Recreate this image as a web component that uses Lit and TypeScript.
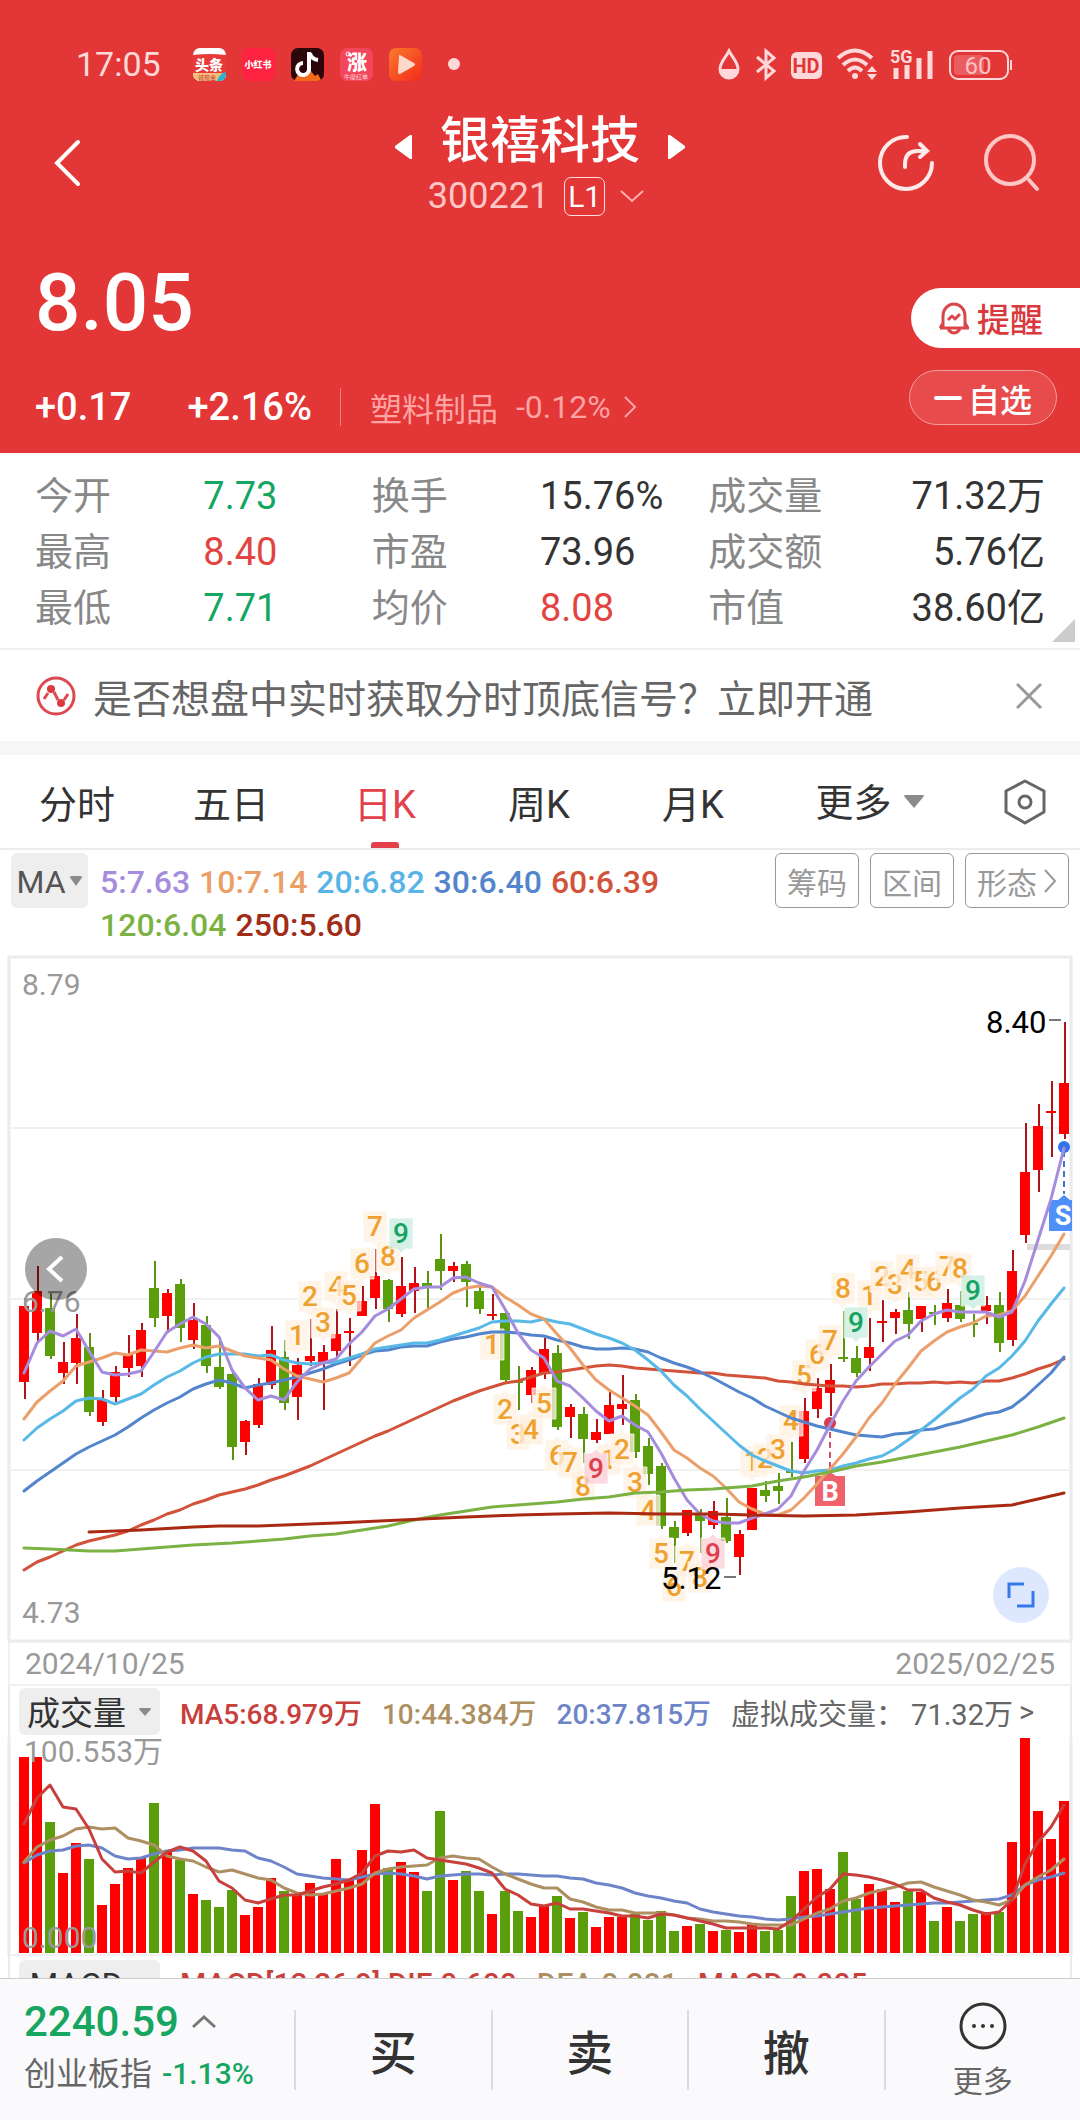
import { LitElement, html, svg, css } from "lit";
import { customElement, property } from "lit/decorators.js";

type Pair = [number, number];

const FIRST = 24;
const STEP = 13;
const at = (i: number) => FIRST + i * STEP;

const COLORS = { r: "#fe0000", g: "#5a9f0b" };
const WICKS = { r: "#b01418", g: "#5a9413" };

// r = closed up, g = closed down; then high, body top, body bottom, low in units from the top of the plot
const CANDLES: ["r" | "g", number, number, number, number][] = [
  ["r", 342, 350, 426, 443], ["r", 310, 335, 377, 385], ["g", 337, 352, 400, 403], ["r", 386, 406, 417, 428],
  ["r", 358, 382, 407, 428], ["g", 377, 391, 456, 460], ["r", 434, 443, 466, 470], ["r", 410, 416, 441, 446],
  ["r", 379, 399, 412, 421], ["r", 367, 374, 410, 421], ["g", 305, 332, 362, 371], ["r", 333, 337, 360, 377],
  ["g", 323, 328, 372, 386], ["r", 347, 364, 384, 393], ["g", 360, 369, 410, 417], ["g", 381, 411, 431, 433],
  ["g", 415, 418, 491, 504], ["r", 464, 465, 486, 499], ["r", 422, 428, 469, 472], ["r", 370, 394, 429, 433],
  ["g", 384, 401, 447, 454], ["r", 402, 409, 441, 464], ["r", 363, 400, 405, 410], ["r", 389, 396, 407, 454],
  ["r", 353, 378, 395, 401], ["r", 362, 375, 375, 410], ["r", 330, 345, 360, 360], ["r", 293, 320, 342, 353],
  ["g", 323, 324, 353, 366], ["r", 301, 330, 358, 361], ["r", 311, 327, 335, 357], ["g", 315, 327, 332, 352],
  ["g", 278, 303, 315, 334], ["r", 306, 310, 315, 326], ["g", 305, 308, 326, 351], ["g", 331, 335, 353, 358],
  ["r", 338, 358, 358, 364], ["g", 356, 357, 424, 426], ["g", 410, 425, 425, 454], ["r", 411, 414, 439, 447],
  ["r", 382, 393, 418, 423], ["g", 389, 397, 471, 474], ["r", 448, 451, 461, 482], ["g", 451, 458, 483, 507],
  ["r", 463, 476, 484, 487], ["r", 436, 449, 478, 478], ["r", 419, 448, 453, 469], ["g", 438, 444, 496, 502],
  ["g", 482, 490, 518, 529], ["g", 507, 510, 570, 573], ["g", 565, 571, 582, 607], ["r", 554, 554, 577, 580],
  ["g", 553, 559, 565, 597], ["r", 545, 555, 569, 573], ["g", 542, 561, 585, 587], ["r", 574, 578, 601, 619],
  ["r", 532, 532, 574, 574], ["g", 525, 534, 540, 546], ["g", 517, 530, 535, 548], ["g", 486, 515, 515, 521],
  ["r", 442, 455, 503, 507], ["r", 422, 432, 453, 462], ["r", 408, 424, 437, 460], ["g", 355, 401, 401, 406],
  ["g", 390, 402, 417, 421], ["r", 362, 391, 402, 415], ["r", 344, 365, 365, 386], ["r", 353, 356, 362, 378],
  ["g", 336, 354, 368, 383], ["r", 350, 350, 363, 376], ["g", 349, 356, 356, 369], ["r", 333, 347, 362, 366],
  ["g", 335, 349, 363, 366], ["g", 358, 367, 367, 381], ["r", 340, 349, 355, 368], ["g", 336, 349, 387, 396],
  ["r", 294, 315, 384, 390], ["r", 167, 216, 279, 287], ["r", 148, 170, 214, 236], ["r", 125, 155, 155, 201],
  ["r", 66, 127, 178, 183],
];

const MA5 = [417, 387, 375, 380, 373, 395, 416, 419, 418, 415, 396, 376, 368, 361, 368, 381, 414, 432, 444, 440, 444, 426, 413, 407, 403, 388, 376, 360, 353, 343, 333, 331, 331, 322, 321, 327, 331, 353, 377, 394, 402, 425, 430, 442, 455, 465, 460, 469, 476, 497, 522, 544, 558, 565, 567, 567, 562, 558, 553, 540, 515, 494, 469, 445, 425, 411, 398, 385, 379, 365, 358, 354, 356, 356, 356, 361, 356, 325, 284, 243, 192];
const MA10 = [463, 446, 435, 425, 410, 406, 402, 397, 399, 394, 395, 396, 392, 389, 392, 390, 395, 400, 402, 404, 413, 420, 423, 426, 422, 417, 402, 387, 380, 374, 362, 354, 346, 337, 332, 330, 331, 341, 349, 358, 363, 378, 392, 409, 424, 434, 442, 450, 459, 476, 494, 502, 512, 520, 532, 546, 553, 558, 559, 554, 542, 528, 513, 498, 481, 462, 447, 428, 412, 395, 385, 376, 371, 367, 360, 359, 355, 340, 320, 300, 278];
const MA20 = [484, 472, 463, 455, 445, 442, 443, 448, 443, 438, 429, 421, 415, 407, 401, 398, 398, 398, 400, 399, 404, 407, 408, 407, 406, 402, 398, 393, 391, 389, 387, 387, 384, 380, 376, 372, 366, 365, 365, 366, 363, 366, 368, 373, 378, 382, 387, 394, 404, 415, 429, 440, 453, 465, 477, 489, 499, 505, 510, 515, 517, 515, 514, 510, 507, 503, 500, 493, 484, 474, 464, 453, 442, 433, 420, 412, 400, 385, 365, 348, 332];
const MA30 = [535, 525, 516, 507, 498, 491, 485, 479, 471, 462, 454, 447, 441, 433, 428, 424, 427, 432, 429, 427, 424, 421, 417, 413, 408, 404, 399, 395, 394, 391, 390, 390, 386, 383, 381, 378, 376, 376, 377, 379, 380, 384, 387, 391, 393, 393, 392, 393, 396, 402, 407, 411, 416, 422, 429, 436, 442, 450, 456, 462, 466, 470, 473, 476, 479, 480, 481, 478, 477, 474, 473, 469, 466, 462, 458, 456, 451, 441, 429, 417, 401];
const MA60 = [614, 606, 601, 595, 589, 585, 582, 579, 575, 569, 564, 558, 554, 548, 544, 539, 536, 533, 529, 524, 520, 515, 510, 504, 498, 492, 486, 480, 475, 469, 463, 457, 451, 445, 440, 435, 431, 427, 425, 421, 417, 416, 414, 412, 410, 409, 410, 412, 413, 414, 415, 416, 417, 417, 419, 420, 421, 422, 425, 426, 428, 429, 430, 430, 431, 430, 428, 428, 427, 427, 426, 427, 426, 427, 425, 425, 422, 418, 413, 409, 403];
const MA120: Pair[] = [[0, 592], [2, 593], [5, 595], [7, 595], [10, 592], [13, 589], [16, 587], [18, 585], [20, 583], [22, 580], [24, 578], [26, 574], [28, 570], [30, 564], [32, 559], [34, 555], [36, 551], [38, 549], [41, 546], [43, 543], [45, 541], [47, 537], [49, 536], [51, 534], [53, 533], [54, 532], [56, 530], [58, 525], [60, 521], [62, 516], [64, 510], [66, 506], [68, 501], [70, 496], [72, 491], [74, 485], [76, 479], [78, 471], [80, 462]];
const MA250: Pair[] = [[5, 576], [9, 574], [13, 571], [15, 570], [18, 570], [20, 569], [24, 567], [29, 564], [34, 561], [38, 559], [41, 558], [45, 557], [49, 558], [53, 558], [56, 559], [60, 560], [64, 559], [68, 556], [72, 552], [76, 549], [78, 543], [80, 537]];

// day index, digit, centre height, side the pointer is on
const MARKS: [number, number, number, "u" | "d"][] = [
  [21, 1, 379, "d"], [22, 2, 340, "d"], [23, 3, 366, "d"], [24, 4, 330, "d"], [25, 5, 339, "d"], [26, 6, 307, "d"],
  [27, 7, 270, "d"], [28, 8, 300, "d"], [29, 9, 277, "d"],
  [36, 1, 388, "u"], [37, 2, 453, "u"], [38, 3, 478, "u"], [39, 4, 473, "u"], [40, 5, 447, "u"], [41, 6, 499, "u"],
  [42, 7, 506, "u"], [43, 8, 530, "u"], [45, 1, 503, "u"], [44, 9, 512, "u"], [46, 2, 493, "u"], [47, 3, 526, "u"],
  [48, 4, 554, "u"], [49, 5, 597, "u"], [50, 6, 630, "u"], [51, 7, 605, "u"], [52, 8, 621, "u"], [53, 9, 597, "u"],
  [56, 1, 505, "d"], [57, 2, 502, "d"], [58, 3, 493, "d"], [59, 4, 464, "d"], [60, 5, 419, "d"], [61, 6, 398, "d"],
  [62, 7, 384, "d"], [63, 8, 332, "d"], [65, 1, 339, "d"], [64, 9, 366, "d"], [66, 2, 320, "d"], [67, 3, 328, "d"],
  [68, 4, 313, "d"], [69, 5, 325, "d"], [70, 6, 325, "d"], [71, 7, 310, "d"], [72, 8, 312, "d"], [73, 9, 334, "d"],
];

const VOLUME_TOPS = [20, 20, 85, 136, 106, 122, 168, 147, 131, 121, 66, 115, 123, 157, 163, 170, 153, 178, 170, 141, 154, 158, 146, 156, 122, 143, 113, 67, 131, 125, 135, 154, 74, 143, 134, 154, 177, 154, 174, 180, 168, 159, 181, 175, 190, 180, 180, 177, 183, 174, 194, 189, 187, 194, 193, 195, 186, 194, 193, 159, 134, 132, 152, 115, 162, 147, 152, 165, 154, 155, 184, 170, 184, 177, 175, 175, 105, 1, 74, 102, 64];
const VOL5 = [87, 61, 48, 70, 72, 92, 122, 135, 134, 136, 125, 115, 110, 114, 124, 144, 151, 163, 166, 162, 158, 158, 154, 150, 147, 143, 136, 119, 114, 115, 113, 121, 123, 125, 127, 131, 136, 152, 158, 167, 169, 166, 172, 172, 174, 176, 179, 179, 181, 177, 178, 181, 184, 187, 191, 191, 191, 191, 192, 184, 172, 160, 152, 137, 138, 140, 143, 147, 153, 153, 161, 165, 168, 173, 177, 175, 163, 127, 105, 90, 68];
const VOL10 = [125, 110, 103, 99, 92, 90, 92, 91, 101, 104, 108, 119, 122, 124, 130, 135, 133, 137, 141, 143, 151, 156, 158, 157, 154, 151, 147, 136, 132, 130, 129, 128, 121, 119, 121, 122, 130, 137, 142, 147, 151, 151, 162, 165, 170, 173, 173, 176, 176, 176, 178, 181, 182, 184, 184, 185, 187, 188, 188, 188, 182, 176, 172, 164, 161, 156, 153, 150, 146, 145, 150, 154, 158, 163, 165, 168, 163, 148, 140, 133, 122];
const VOL20 = [126, 118, 114, 113, 109, 108, 111, 119, 122, 121, 117, 114, 113, 111, 111, 111, 113, 114, 121, 124, 130, 137, 139, 141, 142, 143, 140, 137, 136, 137, 139, 142, 139, 138, 137, 137, 138, 137, 137, 138, 139, 139, 141, 142, 146, 148, 151, 156, 159, 161, 164, 166, 172, 175, 177, 179, 180, 182, 183, 182, 180, 179, 177, 175, 173, 171, 170, 169, 168, 167, 166, 166, 165, 164, 163, 162, 158, 148, 143, 140, 136];

const daily = (ys: number[]) => ys.map((y, i) => `${at(i)},${y}`).join(" ");
const sparse = (ps: Pair[]) => ps.map(([i, y]) => `${at(i)},${y}`).join(" ");

const chartText = css`
  text {
    font-family: Roboto, "Noto Sans CJK SC", sans-serif;
  }
  svg {
    display: block;
    width: 100%;
    height: auto;
    overflow: visible;
  }
  .line {
    fill: none;
    stroke-width: 3;
    stroke-linejoin: round;
    stroke-linecap: round;
  }
  .scale {
    font-size: 30px;
    fill: #999;
  }
`;

@customElement("price-chart")
export class PriceChart extends LitElement {
  static styles = [
    chartText,
    css`
      :host {
        display: block;
        position: relative;
      }
      .extreme {
        font-size: 31px;
        fill: #000;
      }
      .digit {
        font-size: 28px;
        font-weight: 500;
        text-anchor: middle;
      }
      .trade {
        font-size: 27px;
        font-weight: 700;
        fill: #fff;
        text-anchor: middle;
      }
      button {
        position: absolute;
        border: 0;
        padding: 0;
        border-radius: 50%;
      }
      .older {
        left: 25px;
        top: 282px;
        width: 62px;
        height: 62px;
        background: rgba(0, 0, 0, 0.35);
      }
      .expand {
        right: 31px;
        bottom: 19px;
        width: 56px;
        height: 56px;
        background: #dde8fe;
      }
    `,
  ];

  private mark([i, n, y, side]: (typeof MARKS)[number]) {
    const x = at(i);
    const nine = n === 9;
    const box = nine ? (side === "d" ? "#c8ecdc" : "#fccdd6") : "#fff0e0";
    const ink = nine ? (side === "d" ? "#17a363" : "#dc3f4e") : "#eea12f";
    const head = side === "u" ? "h8 l4 -4 l4 4 h8" : "h24";
    const foot = side === "d" ? "h-8 l-4 4 l-4 -4 h-8" : "h-24";
    return svg`
      <path d=${`M${x - 12} ${y - 15} ${head} v31 ${foot} z`} fill=${box} fill-opacity=".75" stroke="#fff" stroke-opacity=".7"></path>
      <text class="digit" x=${x} y=${y + 10} fill=${ink}>${n}</text>`;
  }

  private candle([dir, high, top, bottom, low]: (typeof CANDLES)[number], i: number) {
    const x = at(i);
    return svg`
      <rect x=${x} y=${high} width="2" height=${low - high} fill=${WICKS[dir]}></rect>
      <rect x=${x - 5} y=${top} width="10" height=${Math.max(bottom - top, 2)} fill=${COLORS[dir]}></rect>`;
  }

  render() {
    return html`
      <svg viewBox="0 0 1080 686" role="img" aria-label="日K">
        <path d="M9 172H1071M9 343H1071M9 514H1071" stroke="#f1f1f1" stroke-width="2"></path>
        <path d="M9 686V1H1071V686M9 685H1071" fill="none" stroke="#ebebeb" stroke-width="3"></path>
        <rect x="1027" y="288" width="43" height="6" fill="#dcdcdc"></rect>
        <text class="scale" x="22" y="39">8.79</text>
        <text class="scale" x="22" y="667">4.73</text>
        ${CANDLES.map((c, i) => this.candle(c, i))}
        ${MARKS.map((m) => this.mark(m))}
        <text class="scale" x="22" y="356">6.76</text>
        <path d="M1064 195V238" stroke="#3c78c8" stroke-width="2" stroke-dasharray="6 4"></path>
        <circle cx="1064" cy="191" r="6" fill="#2f74ea"></circle>
        <path d="M1049 244H1058L1064 239L1070 244H1072V275H1049z" fill="#4f90f8"></path>
        <text class="trade" x="1063" y="269">S</text>
        <circle cx="830" cy="467" r="6" fill="#d83a50"></circle>
        <path d="M830 476V514" stroke="#d0506a" stroke-width="2" stroke-dasharray="6 4"></path>
        <path d="M815 520H824L830 516L836 520H845V550H815z" fill="#f0626b"></path>
        <text class="trade" x="830" y="545">B</text>
        <polyline class="line" stroke="#d2533a" points=${daily(MA60)}></polyline>
        <polyline class="line" stroke="#5385cc" points=${daily(MA30)}></polyline>
        <polyline class="line" stroke="#58b8e6" points=${daily(MA20)}></polyline>
        <polyline class="line" stroke="#eb9f6b" points=${daily(MA10)}></polyline>
        <polyline class="line" stroke="#a68cdc" points=${daily(MA5)}></polyline>
        <polyline class="line" stroke="#7bb243" points=${sparse(MA120)}></polyline>
        <polyline class="line" stroke="#a92912" points=${sparse(MA250)}></polyline>
        <text class="extreme" x="986" y="77">8.40</text>
        <path d="M1049 64H1061M724 621H736" stroke="#777" stroke-width="2"></path>
        <text class="extreme" x="661" y="633">5.12</text>
      </svg>
      <button class="older" aria-label="更早">
        <svg viewBox="0 0 62 62">
          <path d="M37 19L24 31L37 43" fill="none" stroke="#fff" stroke-width="4"></path>
        </svg>
      </button>
      <button class="expand" aria-label="全屏">
        <svg viewBox="0 0 56 56">
          <path d="M31 17H16V31M40 24V39H24" fill="none" stroke="#3478ea" stroke-width="3"></path>
        </svg>
      </button>
    `;
  }
}

@customElement("volume-chart")
export class VolumeChart extends LitElement {
  static styles = [
    chartText,
    css`
      :host {
        display: block;
      }
    `,
  ];

  render() {
    return html`
      <svg viewBox="0 0 1080 220" role="img" aria-label="成交量">
        <path d="M9 0V220M1071 0V220" stroke="#ebebeb" stroke-width="3"></path>
        <path d="M10 218H1071" stroke="#f1f1f1" stroke-width="2"></path>
        ${VOLUME_TOPS.map(
          (top, i) => svg`<rect x=${at(i) - 5} y=${top} width="10" height=${216 - top} fill=${COLORS[CANDLES[i][0]]}></rect>`
        )}
        <polyline class="line" stroke="#6d84c9" points=${daily(VOL20)}></polyline>
        <polyline class="line" stroke="#ad8f62" points=${daily(VOL10)}></polyline>
        <polyline class="line" stroke="#c7403c" points=${daily(VOL5)}></polyline>
        <text class="scale" x="24" y="25">100.553万</text>
        <text class="scale" x="22" y="211">0.000</text>
      </svg>
    `;
  }
}

@customElement("status-bar")
export class StatusBar extends LitElement {
  static styles = css`
    :host {
      display: flex;
      align-items: center;
      height: 96px;
      padding: 32px 67px 0 76px;
      color: #ffd9d9;
      font-size: 34px;
    }
    .apps,
    .system {
      display: flex;
      align-items: center;
      gap: 16px;
    }
    .system {
      gap: 14px;
    }
    .apps {
      flex: 1;
      padding-left: 32px;
    }
    svg {
      display: block;
      overflow: visible;
      font-family: Roboto, "Noto Sans CJK SC", sans-serif;
    }
    .dot {
      width: 12px;
      height: 12px;
      margin-left: 10px;
      border-radius: 50%;
      background: #ffd9d9;
    }
  `;

  render() {
    return html`
      <span>17:05</span>
      <div class="apps">
        <svg width="33" height="33" viewBox="0 0 33 33">
          <rect width="33" height="33" rx="7" fill="#fff"></rect>
          <path d="M0 7Q16 5 33 7V26H0z" fill="#e93a3b"></path>
          <path d="M0 25H33V27Q32 33 26 33H7Q1 33 0 26z" fill="#f3bd7c"></path>
          <path d="M33 24V27Q32 33 26 33H24Q26 26 33 24z" fill="#26b5cf"></path>
          <text x="16" y="22" font-size="14" font-weight="900" fill="#fff" text-anchor="middle">头条</text>
          <text x="14" y="32" font-size="6" fill="#c4362c" text-anchor="middle">领现金</text>
        </svg>
        <svg width="33" height="33" viewBox="0 0 33 33">
          <rect width="33" height="33" rx="7" fill="#fe2341"></rect>
          <text x="16" y="20" font-size="9" font-weight="900" fill="#fff" text-anchor="middle">小红书</text>
        </svg>
        <svg width="33" height="33" viewBox="0 0 33 33">
          <rect width="33" height="33" rx="7" fill="#2c0608"></rect>
          <path d="M3 33L8 25L13 28L19 22L24 28L27 26L30 32Q28 33 26 33z" fill="#f26b1d"></path>
          <path d="M18 4V20A6 6 0 1 1 12 15" fill="none" stroke="#fff" stroke-width="4"></path>
          <path d="M19 5Q20 11 27 12" fill="none" stroke="#fff" stroke-width="4"></path>
        </svg>
        <svg width="33" height="33" viewBox="0 0 33 33">
          <rect width="33" height="33" rx="7" fill="#f3465c"></rect>
          <text x="17" y="22" font-size="20" font-weight="900" fill="#fff" text-anchor="middle">涨</text>
          <circle cx="8" cy="6" r="2" fill="none" stroke="#fff"></circle>
          <text x="16" y="31" font-size="6" fill="#ffd9d9" text-anchor="middle">牛摩红单</text>
        </svg>
        <svg width="33" height="33" viewBox="0 0 33 33">
          <defs>
            <linearGradient id="orange" x1="0" y1="0" x2="1" y2="1">
              <stop offset="0" stop-color="#fb7a2c"></stop>
              <stop offset="1" stop-color="#f22a1c"></stop>
            </linearGradient>
          </defs>
          <rect width="33" height="33" rx="7" fill="url(#orange)"></rect>
          <path d="M10 8Q9 7 11 7L25 15Q27 16 25 18L11 26Q9 26 9 25z" fill="#ffd8cc"></path>
        </svg>
        <span class="dot"></span>
      </div>
      <div class="system">
        <svg width="26" height="33" viewBox="0 0 26 33">
          <path d="M14 3C17 9 23 14 23 21A9 9 0 0 1 5 21C5 14 11 9 14 3z" fill="none" stroke="#ffd9d9" stroke-width="3"></path>
          <path d="M4 21H24A10 10 0 0 1 4 21z" fill="#ffd9d9"></path>
        </svg>
        <svg width="22" height="33" viewBox="0 0 22 33">
          <path d="M2 9L19 23L11 30V3L19 10L2 24" fill="none" stroke="#ffd9d9" stroke-width="3"></path>
        </svg>
        <svg width="31" height="33" viewBox="0 0 31 33">
          <rect y="4" width="31" height="27" rx="6" fill="#ffd9d9"></rect>
          <text x="15" y="25" font-size="20" font-weight="700" fill="#e23637" text-anchor="middle">HD</text>
        </svg>
        <svg width="40" height="33" viewBox="0 0 40 33">
          <g fill="none" stroke="#ffd9d9" stroke-width="4">
            <path d="M2 10Q19 -5 36 10"></path>
            <path d="M7 17Q19 6 31 17"></path>
            <path d="M12 23Q19 16 26 23"></path>
          </g>
          <circle cx="19" cy="28" r="3" fill="#ffd9d9"></circle>
          <path d="M31 24L36 18L41 24zM31 26L36 32L41 26z" fill="#ffd9d9"></path>
        </svg>
        <svg width="45" height="33" viewBox="0 0 45 33">
          <text x="0" y="15" font-size="18" font-weight="700" fill="#ffd9d9">5G</text>
          <path d="M6 20V31M17 17V31M29 10V31M40 3V31" stroke="#ffd9d9" stroke-width="5"></path>
        </svg>
        <svg width="64" height="33" viewBox="0 0 64 33">
          <rect x="1" y="3" width="58" height="28" rx="8" fill="none" stroke="#ffd9d9" stroke-width="2"></rect>
          <rect x="5" y="7" width="30" height="20" rx="4" fill="#ea5c5e"></rect>
          <path d="M62 12V22" stroke="#ffd9d9" stroke-width="2"></path>
          <text x="29" y="26" font-size="24" fill="#ffc2c2" text-anchor="middle">60</text>
        </svg>
      </div>
    `;
  }
}

@customElement("pick-list")
export class PickList extends LitElement {
  @property() label = "";
  @property() value = "";

  static styles = css`
    :host {
      display: flex;
      align-items: center;
      gap: var(--pick-gap, 2px);
      color: inherit;
    }
    select {
      appearance: none;
      border: 0;
      padding: 3px 0 0;
      margin: 0;
      background: none;
      color: inherit;
      font: inherit;
    }
    i {
      border: solid transparent;
      border-width: var(--arrow, 10px) var(--arrow-half, 7px) 0;
      border-top-color: #8b8b8b;
      border-radius: 3px;
    }
  `;

  render() {
    return html`<select aria-label=${this.label}><option>${this.value}</option></select><i></i>`;
  }
}

const QUOTES: [string, string, string][] = [
  ["今开", "7.73", "down"], ["换手", "15.76%", ""], ["成交量", "71.32万", ""],
  ["最高", "8.40", "up"], ["市盈", "73.96", ""], ["成交额", "5.76亿", ""],
  ["最低", "7.71", "down"], ["均价", "8.08", "up"], ["市值", "38.60亿", ""],
];

const AVERAGES: [string, string][] = [
  ["5:7.63", "ma5"], ["10:7.14", "ma10"], ["20:6.82", "ma20"], ["30:6.40", "ma30"],
  ["60:6.39", "ma60"], ["120:6.04", "ma120"], ["250:5.60", "ma250"],
];

@customElement("app-root")
export class AppRoot extends LitElement {
  static styles = css`
    :host {
      display: flex;
      flex-direction: column;
      height: 100vh;
      background: #fff;
      color: #333;
      font-family: Roboto, "Noto Sans CJK SC", sans-serif;
      font-size: 38px;
    }
    * {
      box-sizing: border-box;
    }
    button {
      border: 0;
      padding: 0;
      background: none;
      color: inherit;
      font: inherit;
      white-space: nowrap;
    }
    a {
      color: inherit;
      text-decoration: none;
    }
    svg {
      display: block;
      flex: none;
    }
    button,
    a {
      display: flex;
      align-items: center;
      justify-content: center;
    }
    .scroll {
      flex: 1;
      min-height: 0;
      overflow: hidden auto;
      scrollbar-width: none;
    }

    .head {
      background: #e23637;
      color: #fff;
    }
    .nav {
      display: grid;
      grid-template-columns: 1fr auto 1fr;
      height: 126px;
      padding: 0 40px;
    }
    .tools {
      display: flex;
      justify-content: flex-end;
      align-items: center;
      gap: 44px;
      padding-top: 8px;
    }
    .back {
      justify-self: start;
      padding: 8px 0 0 8px;
    }
    .name {
      display: flex;
      align-items: center;
      justify-content: center;
      gap: 28px;
      height: 58px;
      margin-top: 16px;
    }
    h1 {
      margin: 0;
      font-size: 50px;
      line-height: 58px;
      font-weight: 500;
    }
    .name button {
      padding-top: 12px;
    }
    .code {
      display: flex;
      align-items: center;
      justify-content: center;
      gap: 15px;
      height: 40px;
      margin-top: 6px;
      padding-right: 8px;
      font-size: 36px;
      color: #ffc6c6;
    }
    .level {
      width: 41px;
      height: 39px;
      border: 1px solid #ffdede;
      border-radius: 7px;
      color: #fff;
      font-size: 30px;
      line-height: 37px;
      text-align: center;
    }
    .quote {
      display: flex;
      justify-content: space-between;
      padding: 41px 0 21px 35px;
    }
    .price {
      height: 80px;
      font-size: 80px;
      line-height: 80px;
      font-weight: 500;
    }
    .change {
      display: flex;
      align-items: center;
      height: 50px;
      margin-top: 39px;
      font-size: 38px;
      font-weight: 500;
    }
    .change b {
      font-weight: inherit;
      margin-right: 56px;
    }
    .change b + b {
      margin-right: 28px;
    }
    .sector {
      gap: 18px;
      padding-left: 29px;
      border-left: 1px solid #f08080;
      color: #ffa3a3;
      height: 38px;
      font-size: 32px;
      font-weight: 400;
    }
    .sector svg {
      margin-left: -6px;
    }
    .side {
      display: flex;
      flex-direction: column;
      align-items: flex-end;
      gap: 22px;
      padding-top: 25px;
    }
    .remind {
      gap: 8px;
      height: 60px;
      padding: 0 37px 0 28px;
      border-radius: 30px 0 0 30px;
      background: #fff;
      color: #d9393c;
      font-size: 33px;
      font-weight: 500;
    }
    .watch {
      gap: 6px;
      height: 55px;
      padding: 0 24px;
      margin-right: 23px;
      border: 1px solid #f3a0a0;
      border-radius: 28px;
      background: #e74b4c;
      font-size: 32px;
      font-weight: 500;
    }

    .stats {
      position: relative;
      display: grid;
      grid-template-columns: repeat(3, 1fr);
      margin: 0;
      padding: 15px 35px 12px;
      border-bottom: 2px solid #efefef;
      line-height: 56px;
    }
    .stats div {
      display: grid;
      grid-template-columns: 1fr 1fr;
    }
    .stats div:nth-child(3n) {
      grid-template-columns: auto 1fr;
      text-align: right;
    }
    dt {
      color: #888;
    }
    dd {
      margin: 0;
    }
    .up {
      color: #e24441;
    }
    .down {
      color: #17a562;
    }
    .corner {
      position: absolute;
      right: 5px;
      bottom: 6px;
    }

    .notice {
      display: flex;
      align-items: center;
      height: 91px;
      padding: 0 38px 0 36px;
      color: #666;
      font-size: 39px;
    }
    .notice a {
      flex: 1;
      justify-content: flex-start;
      margin-left: 17px;
    }
    .tabs {
      display: grid;
      grid-template-columns: repeat(5, 1fr) 200px 110px;
      height: 109px;
      border-top: 14px solid #f7f7f7;
      border-bottom: 2px solid #ececec;
    }
    .tabs > * {
      position: relative;
      justify-content: center;
    }
    .tabs .on {
      color: #e2404a;
    }
    .tabs .on::after {
      content: "";
      position: absolute;
      left: 50%;
      bottom: 0;
      width: 28px;
      height: 6px;
      margin-left: -14px;
      border-radius: 3px 3px 0 0;
      background: #e2404a;
    }
    .tabs pick-list {
      --pick-gap: 10px;
      --arrow: 13px;
      --arrow-half: 11px;
    }

    .averages {
      display: flex;
      align-items: flex-start;
      min-height: 106px;
      padding: 3px 11px 0;
    }
    .chip {
      flex: none;
      justify-content: center;
      border-radius: 6px;
      background: #eeeeee;
    }
    .ma {
      height: 55px;
      width: 77px;
      color: #555;
      font-size: 32px;
    }
    .values {
      flex: 1;
      display: flex;
      flex-wrap: wrap;
      column-gap: 9px;
      margin: 8px 60px 0 12px;
      font-size: 32px;
      line-height: 43px;
      font-weight: 500;
    }
    .ma5 { color: #a68cdc; }
    .ma10 { color: #eb9f66; }
    .ma20 { color: #58b4e6; }
    .ma30 { color: #5385cc; }
    .ma60 { color: #d2533a; }
    .ma120 { color: #7bb243; }
    .ma250 { color: #a02c17; }
    .views {
      display: flex;
      gap: 11px;
    }
    .views button {
      height: 55px;
      padding: 0 11px;
      border: 1px solid #999;
      border-radius: 6px;
      color: #999;
      font-size: 30px;
      gap: 6px;
    }

    .dates {
      display: flex;
      justify-content: space-between;
      height: 44px;
      margin: 0 8px;
      padding: 0 15px;
      border: solid #f1f1f1;
      border-width: 0 2px 2px;
      color: #999;
      font-size: 30px;
      line-height: 44px;
    }
    .indicator {
      display: flex;
      align-items: center;
      gap: 20px;
      height: 51px;
      margin: 0 8px;
      padding: 0 9px;
      border: solid #ebebeb;
      border-width: 0 2px;
      font-size: 28px;
      white-space: nowrap;
    }
    .indicator .chip {
      width: 141px;
      height: 47px;
      font-size: 33px;
      --pick-gap: 12px;
      --arrow: 8px;
      --arrow-half: 7px;
    }
    .macd {
      padding-top: 2px;
      font-size: 30px;
    }
    .c1 { color: #c7403c; font-weight: 500; }
    .c2 { color: #ad8f62; font-weight: 500; }
    .c3 { color: #6d84c9; font-weight: 500; }
    .indicator a {
      gap: 6px;
      color: #666;
      font-size: 29px;
    }

    .foot {
      display: grid;
      grid-template-columns: 294px repeat(4, 1fr);
      align-items: center;
      height: 142px;
      border-top: 1px solid #ccc;
      background: #fafafc;
    }
    .foot > * {
      height: 80px;
    }
    .index {
      flex-direction: column;
      align-items: flex-start;
      justify-content: center;
      gap: 3px;
      padding: 0 0 8px 24px;
    }
    .index span {
      display: flex;
      align-items: center;
      white-space: nowrap;
    }
    .index .points {
      gap: 13px;
      font-size: 42px;
      line-height: 54px;
      font-weight: 500;
      color: #17a562;
    }
    .index .move {
      gap: 10px;
      font-size: 32px;
      line-height: 44px;
      color: #666;
    }
    .move b {
      color: #17a562;
      font-size: 30px;
      font-weight: 500;
    }
    .deal {
      border-left: 2px solid #dcdcdf;
      font-size: 47px;
      font-weight: 500;
    }
    .more {
      flex-direction: column;
      gap: 10px;
      padding-top: 6px;
      border-left: 2px solid #dcdcdf;
      color: #666;
      font-size: 30px;
      line-height: 44px;
    }
  `;

  render() {
    return html`
      <div class="scroll">
        <header class="head">
          <status-bar></status-bar>
          <div class="nav">
            <button class="back" aria-label="返回">
              <svg width="40" height="48" viewBox="0 0 40 48">
                <path d="M30 3L9 24L30 45" fill="none" stroke="#fff" stroke-width="4" stroke-linecap="round"></path>
              </svg>
            </button>
            <div>
              <div class="name">
                <button aria-label="上一只">
                  <svg width="17" height="24" viewBox="0 0 17 24"><path d="M17 0V24L15 24L0 13V11L15 0z" fill="#fff"></path></svg>
                </button>
                <h1>银禧科技</h1>
                <button aria-label="下一只">
                  <svg width="17" height="24" viewBox="0 0 17 24"><path d="M0 0V24L2 24L17 13V11L2 0z" fill="#fff"></path></svg>
                </button>
              </div>
              <div class="code">
                <span>300221</span><span class="level">L1</span>
                <svg width="24" height="14" viewBox="0 0 24 14"><path d="M1 2L12 12L23 2" fill="none" stroke="#ffb0b0" stroke-width="2"></path></svg>
              </div>
            </div>
            <div class="tools">
              <button aria-label="分享">
                <svg width="60" height="60" viewBox="0 0 60 60" fill="none" stroke="#ffeaea" stroke-width="4" stroke-linecap="round">
                  <path d="M31 4A26 26 0 1 0 56 30"></path>
                  <path d="M29 34V31Q29 18 42 18H50M44 11L51 18L44 24"></path>
                </svg>
              </button>
              <button aria-label="搜索">
                <svg width="60" height="60" viewBox="0 0 60 60" fill="none" stroke="#ffc6c6" stroke-width="4" stroke-linecap="round">
                  <circle cx="30" cy="27" r="24"></circle>
                  <path d="M49 47L57 56"></path>
                </svg>
              </button>
            </div>
          </div>
          <div class="quote">
            <div>
              <div class="price">8.05</div>
              <div class="change">
                <b>+0.17</b><b>+2.16%</b>
                <a class="sector" href="#sector">
                  <span>塑料制品</span><span>-0.12%</span>
                  <svg width="14" height="22" viewBox="0 0 14 22"><path d="M2 1L12 11L2 21" fill="none" stroke="#ffa3a3" stroke-width="2"></path></svg>
                </a>
              </div>
            </div>
            <div class="side">
              <button class="remind">
                <svg width="30" height="34" viewBox="0 0 30 34" fill="none" stroke="#d9474b" stroke-width="3" stroke-linejoin="round">
                  <path d="M4 27V15A11 12 0 0 1 26 15V27M1 27H29L26 22M4 22L1 27"></path>
                  <path d="M9 28Q15 36 21 28"></path>
                  <path d="M9 19L13 15L16 18L21 13"></path>
                </svg>
                提醒
              </button>
              <button class="watch">
                <svg width="28" height="6" viewBox="0 0 28 6"><path d="M2 3H26" stroke="#fff" stroke-width="4" stroke-linecap="round"></path></svg>
                自选
              </button>
            </div>
          </div>
        </header>

        <dl class="stats">
          ${QUOTES.map(([k, v, tone]) => html`<div><dt>${k}</dt><dd class=${tone}>${v}</dd></div>`)}
          <svg class="corner" width="23" height="23" viewBox="0 0 23 23"><path d="M23 0V23H0z" fill="#ccc"></path></svg>
        </dl>

        <div class="notice">
          <svg width="40" height="40" viewBox="0 0 40 40" fill="none" stroke="#dc4a50" stroke-width="3">
            <circle cx="20" cy="20" r="18"></circle>
            <path d="M8 23L12 17M18 16L22 24M28 24L32 18"></path>
            <g fill="#dc3a40" stroke="none"><circle cx="15" cy="13" r="4"></circle><circle cx="25" cy="27" r="4"></circle></g>
          </svg>
          <a href="#open">是否想盘中实时获取分时顶底信号？立即开通</a>
          <button aria-label="关闭">
            <svg width="26" height="26" viewBox="0 0 26 26"><path d="M1 1L25 25M25 1L1 25" stroke="#999" stroke-width="3"></path></svg>
          </button>
        </div>

        <nav class="tabs">
          <button>分时</button><button>五日</button><button class="on">日K</button><button>周K</button><button>月K</button>
          <pick-list label="周期" value="更多"></pick-list>
          <button aria-label="设置">
            <svg width="44" height="46" viewBox="0 0 44 46" fill="none" stroke="#666" stroke-width="3" stroke-linejoin="round">
              <path d="M22 2L41 12V33L22 44L3 33V12z"></path>
              <circle cx="22" cy="23" r="6"></circle>
            </svg>
          </button>
        </nav>

        <section>
          <div class="averages">
            <pick-list class="chip ma" label="指标" value="MA"></pick-list>
            <div class="values">${AVERAGES.map(([t, c]) => html`<span class=${c}>${t}</span>`)}</div>
            <div class="views">
              <button>筹码</button><button>区间</button>
              <button>形态<svg width="14" height="26" viewBox="0 0 14 26"><path d="M2 2L12 13L2 24" fill="none" stroke="#999" stroke-width="2"></path></svg></button>
            </div>
          </div>
          <price-chart></price-chart>
          <div class="dates"><time>2024/10/25</time><time>2025/02/25</time></div>
        </section>

        <section>
          <div class="indicator">
            <pick-list class="chip" label="副图一" value="成交量"></pick-list>
            <span class="c1">MA5:68.979万</span><span class="c2">10:44.384万</span><span class="c3">20:37.815万</span>
            <a href="#volume"><span>虚拟成交量：</span><span>71.32万</span><span>&gt;</span></a>
          </div>
          <volume-chart></volume-chart>
        </section>

        <section class="indicator macd">
          <pick-list class="chip" label="副图二" value="MACD"></pick-list>
          <span class="c1">MACD[12,26,9] DIF:0.600</span><span class="c2">DEA:0.081</span><span class="c1">MACD:0.005</span>
        </section>
      </div>

      <footer class="foot">
        <a class="index" href="#index">
          <span class="points">2240.59
            <svg width="24" height="14" viewBox="0 0 24 14"><path d="M1 12L12 2L23 12" fill="none" stroke="#777" stroke-width="3"></path></svg>
          </span>
          <span class="move">创业板指<b>-1.13%</b></span>
        </a>
        <button class="deal">买</button>
        <button class="deal">卖</button>
        <button class="deal">撤</button>
        <button class="more">
          <svg width="48" height="48" viewBox="0 0 48 48">
            <circle cx="24" cy="24" r="22" fill="none" stroke="#333" stroke-width="3"></circle>
            <g fill="#333"><circle cx="15" cy="24" r="2"></circle><circle cx="24" cy="24" r="2"></circle><circle cx="33" cy="24" r="2"></circle></g>
          </svg>
          更多
        </button>
      </footer>
    `;
  }
}
